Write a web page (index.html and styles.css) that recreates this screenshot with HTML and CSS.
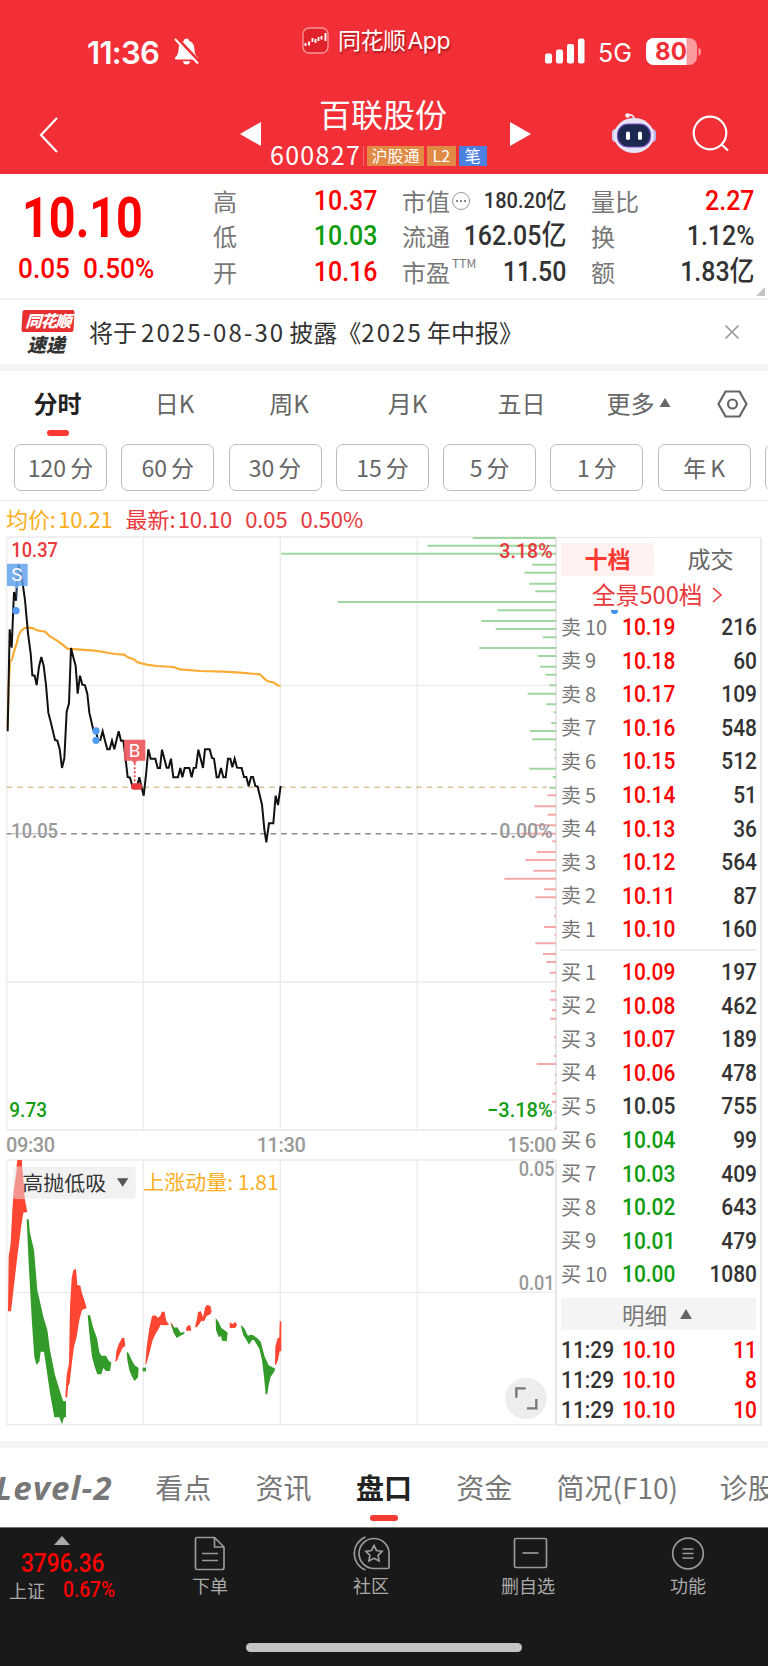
FILE: index.html
```
<!DOCTYPE html>
<html lang="zh-CN">

<head>
    <meta charset="UTF-8">
    <title>百联股份 600827</title>
    <link rel="stylesheet" href="styles.css">
</head>

<body>
    <!-- 顶部 -->
    <header class="header">
        <div class="status">
            <div class="clock">
                <span>11:36</span>
                <svg width="27" height="29" viewBox="0 0 27 29">
                    <path d="M13.5 1.5c1.6 0 2.6 1 2.7 2.4 3.7 1.2 5 4.200 5.200 8.100.2 4.500 1.300 6.500 3.300 8.300.8.8.5 2.200-.8 2.200H3.100c-1.300 0-1.600-1.400-.8-2.200 2-1.800 3.100-3.800 3.300-8.300.2-3.900 1.500-6.900 5.200-8.100.1-1.400 1.100-2.400 2.700-2.400zM9.800 24.200h7.400c-.4 2-1.700 3.300-3.700 3.300s-3.300-1.300-3.700-3.300z" fill="#fff"/>
                    <path d="M3.500 1.500L26 25.500" stroke="#f22f37" stroke-width="4.500"/>
                    <path d="M2 2l23 24.500" stroke="#fff" stroke-width="2"/>
                </svg>
            </div>
            <div class="app">
                <svg width="27" height="27" viewBox="0 0 27 27">
                    <rect x="1" y="1" width="25" height="25" rx="6" fill="#e0232b" stroke="#f9979a" stroke-width="1.300"/>
                    <path d="M3.500 16v3M7 14.500v4M10.500 15v-4M13.500 12v4M16.500 10v4M19.500 9v3.500M23.500 6v8" stroke="#fff" stroke-width="1.900"/>
                </svg>
                <span>同花顺 App</span>
            </div>
            <div class="signal">
                <svg width="40" height="26" viewBox="0 0 40 26" fill="#fff">
                    <rect x="0" y="15.500" width="7" height="10" rx="2"/>
                    <rect x="11" y="11.500" width="7" height="14" rx="2"/>
                    <rect x="22" y="6" width="7" height="19.500" rx="2"/>
                    <rect x="33" y=".5" width="6.500" height="25" rx="2"/>
                </svg>
                <span>5G</span>
                <svg width="56" height="28" viewBox="0 0 56 28">
                    <rect x="0" y="0" width="51" height="27" rx="8" fill="#f99a9e"/>
                    <path d="M8 0h32.500v27H8a8 8 0 0 1-8-8V8a8 8 0 0 1 8-8z" fill="#fff"/>
                    <path d="M52.500 9.500c3.500 1.200 3.500 7.300 0 8.500z" fill="#f99a9e"/>
                    <text x="25" y="22" class="bat">80</text>
                </svg>
            </div>
        </div>
        <div class="titlebar">
            <svg class="back" width="22" height="38" viewBox="0 0 22 38"><path d="M19 2L3 19l16 17" fill="none" stroke="#fff" stroke-width="2.200"/></svg>
            <svg class="prev" width="21" height="24" viewBox="0 0 21 24"><path d="M21 0v24L0 12z" fill="#fff"/></svg>
            <div class="stock">
                <h1>百联股份</h1>
                <div class="code">
                    <span class="code-num">600827</span><i></i>
                    <b class="w3">沪股通</b><b>L2</b><b class="blue">笔</b>
                </div>
            </div>
            <svg class="next" width="21" height="24" viewBox="0 0 21 24"><path d="M0 0v24l21-12z" fill="#fff"/></svg>
            <svg class="robot" width="44" height="42" viewBox="0 0 44 42">
                <path d="M15 3.500c5-1.500 7 0 7 4" fill="none" stroke="#e8e6fb" stroke-width="1.800"/>
                <circle cx="15.500" cy="3.500" r="2.300" fill="#f4f2ff"/>
                <rect x="0" y="17" width="8" height="13" rx="4" fill="#cfd0f5"/>
                <rect x="36" y="17" width="8" height="13" rx="4" fill="#b9b2ee"/>
                <ellipse cx="22" cy="23.500" rx="20" ry="17.500" fill="#e6e5f8"/>
                <rect x="5.500" y="12" width="33" height="23" rx="10.500" fill="#1d2850" stroke="#7a4ec4" stroke-width="1.200"/>
                <rect x="14" y="19.500" width="4" height="8.500" rx="1.800" fill="#fff"/>
                <rect x="26" y="19.500" width="4" height="8.500" rx="1.800" fill="#fff"/>
            </svg>
            <svg class="search" width="38" height="38" viewBox="0 0 38 38"><g fill="none" stroke="#fff" stroke-width="2.200"><circle cx="18" cy="18" r="16.300"/><path d="M29 29l7 6.500"/></g></svg>
        </div>
    </header>

    <!-- 行情数据 -->
    <section class="quote">
        <div class="last red">
            <div class="price"><span>10.10</span></div>
            <div class="change"><span class="n">0.05</span><span class="n">0.50%</span></div>
        </div>
        <div class="stats s1">
            <label>高</label><span class="n red">10.37</span>
            <label>低</label><span class="n green">10.03</span>
            <label>开</label><span class="n red">10.16</span>
        </div>
        <div class="stats s2">
            <label>市值<svg width="20" height="20" viewBox="0 0 20 20"><circle cx="10" cy="10" r="8.500" fill="none" stroke="#999"/><path d="M5 10h2M9 10h2M13 10h2" stroke="#888" stroke-width="1.800"/></svg></label><span class="n small">180.20亿</span>
            <label>流通</label><span class="n">162.05亿</span>
            <label>市盈<sup>TTM</sup></label><span class="n">11.50</span>
        </div>
        <div class="stats s3">
            <label>量比</label><span class="n red">2.27</span>
            <label>换</label><span class="n">1.12%</span>
            <label>额</label><span class="n">1.83亿</span>
        </div>
        <svg class="corner" width="9" height="9"><path d="M9 0v9H0z" fill="#c4c4c4"/></svg>
    </section>

    <!-- 速递 -->
    <section class="news">
        <div class="news-logo"><em>同花顺</em><strong>速递</strong></div>
        <p>将于<s></s><span>2025-08-30</span><s></s>披露《<span>2025</span><s></s>年中报》</p>
        <svg width="16" height="16" viewBox="0 0 16 16"><path d="M1.500 1.500l13 13M14.500 1.500l-13 13" stroke="#999" stroke-width="1.700"/></svg>
    </section>

    <!-- 周期 -->
    <nav class="periods">
        <span class="on">分时</span><span>日K</span><span>周K</span><span>月K</span><span>五日</span>
        <span>更多<svg width="12" height="10"><path d="M6 0l5.500 9H.5z" fill="#666"/></svg></span>
        <span><svg width="31" height="28" viewBox="0 0 31 28"><g fill="none" stroke="#666" stroke-width="2.200"><path d="M8.500 1.500h14l7 12.500-7 12.500h-14L1.500 14z"/><circle cx="15.500" cy="14" r="4.500"/></g></svg></span>
    </nav>
    <div class="minutes">
        <span>120<s></s>分</span><span>60<s></s>分</span><span>30<s></s>分</span><span>15<s></s>分</span><span>5<s></s>分</span><span>1<s></s>分</span><span>年<s></s>K</span><span></span>
    </div>
    <div class="legend">
        <span class="orange">均价: 10.21</span><span>最新: 10.10</span><span>0.05</span><span>0.50%</span>
    </div>

    <main class="trade">
        <div class="charts">
            <!-- 分时图 -->
            <svg class="chart" width="557" height="602" viewBox="0 0 1671 1806">
                <path d="M20 21H1668M20 466H1668M20 1356H1668M20 1800H1668M20 21V1800M430 21V1800M841 21V1800M1252 21V1800" class="grid"/>
                <path d="M1668 21V1800" class="edge"/>
                <path class="vol-g" d="M1418 24H1668M1282 47H1668M844 71H1668M1596 104H1668M1574 128H1668M1588 161H1668M1606 184H1668M1013 216H1668M1492 241H1668M1444 273H1668M1487 297H1668M1628 322H1668M1438 354H1668M1614 378H1668M1620 410H1668M1636 434H1668M1648 466H1668M1583 491H1668M1639 523H1668M1661 547H1668M1654 579H1668M1590 603H1668M1596 628H1668M1662 659H1668M1664 684H1668M1588 716H1668M1658 741H1668M1648 773H1668"/>
                <path class="vol-r" d="M1642 796H1668M1603 829H1668M1643 854H1668M1602 886H1668M1562 911H1668M1657 934H1668M1610 966H1668M1576 990H1668M1600 1022H1668M1513 1046H1668M1632 1078H1668M1606 1102H1668M1664 1135H1668M1662 1159H1668M1632 1191H1668M1664 1215H1668M1606 1240H1668M1629 1272H1668M1639 1296H1668M1649 1328H1668M1653 1384H1668M1651 1409H1668M1656 1441H1668M1651 1466H1668M1666 1498H1668M1662 1522H1668M1665 1546H1668M1662 1578H1668M1610 1602H1668M1665 1635H1668M1664 1659H1668M1657 1691H1668M1656 1715H1668M1662 1747H1668M1664 1795H1668"/>
                <path d="M20 772H1640" stroke="#dcc29a" class="dash"/>
                <path d="M20 911H34M182 911H1498" stroke="#8c8c8c" class="dash"/>
                <path d="M34 911H174M1500 911H1560" stroke="#b4b4b4" stroke-width="3"/>
                <path class="avg" d="M23 590L26 470 30 395 36 388 44 358 50 340 56 316 64 302 74 294 90 293 100 295 110 301 136 305 148 318 170 331 184 341 202 356 230 358 285 362 310 366 345 372 372 374 384 382 402 388 412 397 440 404 470 408 520 411 540 418 600 423 670 425 720 428 780 433 790 443 802 453 822 458 832 466 842 468"/>
                <path class="line" d="M23 604L29 298 35 353 42 186 48 212 54 104 62 130 68 160 75 210 84 310 92 370 97 436 104 437 110 465 117 410 124 381 131 407 138 465 145 548 152 575 165 630 172 632 179 657 186 714 193 685 200 545 207 520 213 354 220 382 227 408 233 491 240 437 247 464 255 466 262 492 268 548 280 600 288 605 294 630 301 630 308 604 315 632 322 658 329 658 336 632 343 658 349 632 356 604 363 632 370 632 376 680 383 741 390 743 397 768 411 770 418 742 424 768 431 797 438 735 445 658 452 686 466 686 473 714 480 714 486 659 493 686 500 713 506 713 513 686 520 742 534 742 541 714 547 742 554 714 568 714 575 742 581 714 588 713 595 659 602 686 609 714 615 658 629 658 636 684 642 686 650 742 656 742 663 714 670 742 677 742 684 686 691 686 697 712 704 686 711 713 725 714 732 741 739 741 746 769 753 741 759 741 766 768 773 770 786 824 793 898 799 937 807 880 820 880 827 797 834 825 842 768"/>
                <path d="M21 101H83V168H58L50 176 42 168H21z" fill="#6eaaf2" fill-opacity=".92"/>
                <path d="M56 104L62 130 68 160V166M50 176V205" stroke="#36659f" stroke-width="4" fill="none" opacity=".6"/>
                <text x="50" y="154" class="mark">S</text>
                <g fill="#539bf3"><circle cx="48" cy="242" r="11"/><circle cx="288" cy="603" r="11"/><circle cx="288" cy="631" r="11"/></g>
                <path d="M372 629H436V692H412L404 702 396 692H372z" fill="#ee585b" fill-opacity=".93"/>
                <text x="404" y="681" class="mark">B</text>
                <path d="M404 700V760" stroke="#e8393c" stroke-width="5" stroke-dasharray="6 6"/>
                <rect x="393" y="760" width="33" height="19" rx="8" fill="#e8393c"/>
                <g class="lab">
                    <text x="34" y="82" fill="#e8393c" textLength="140" lengthAdjust="spacingAndGlyphs">10.37</text>
                    <text x="34" y="923" class="dim" textLength="140" lengthAdjust="spacingAndGlyphs">10.05</text>
                    <text x="28" y="1762" fill="#139c13" textLength="113" lengthAdjust="spacingAndGlyphs">9.73</text>
                    <text x="1498" y="83" fill="#e8393c" textLength="160" lengthAdjust="spacingAndGlyphs">3.18%</text>
                    <text x="1498" y="923" class="dim" textLength="160" lengthAdjust="spacingAndGlyphs">0.00%</text>
                    <text x="1461" y="1762" fill="#139c13" textLength="197" lengthAdjust="spacingAndGlyphs">−3.18%</text>
                </g>
            </svg>
            <div class="axis"><span>09:30</span><span>11:30</span><span>15:00</span></div>
            <!-- 副图指标 -->
            <svg class="chart" width="557" height="268" viewBox="0 204 1671 804">
                <path d="M20 210H1668M20 607H1668M20 1004H1668M20 210V1004M430 210V1004M841 210V1004M1252 210V1004" class="grid"/>
                <path d="M1668 210V1004" class="edge"/>
                <g fill="#fe4632">
                    <path d="M24 664L26 500 32 460 37 360 42 290 52 210H66V240L74 325 82 366 70 368 62 420 52 500 45 560 33 664z"/>
                    <path d="M196 922L200 855 207 820 210 650 215 565 220 541 228 536 232 585 241 587 246 610 253 630 260 654 246 660 238 690 230 740 222 770 216 815 209 880 204 890 202 922z"/>
                    <path d="M346 815L349 785 356 763 366 744 373 744 376 768 368 773 360 790 351 812z"/>
                    <path d="M436 824L440 770 448 715 456 678 466 676 474 684 482 676 485 665 494 665 498 690 507 705 492 706 482 704 476 716 468 730 458 750 448 790 439 822z"/>
                    <path d="M511 696L518 704 524 716 516 714zM558 722L559 712 566 706 571 706 574 722zM585 712L592 680 594 666 603 664 609 682 615 654 620 645 631 647 635 664 632 672 620 678 612 694 604 692 598 702 590 712zM689 697L698 702 706 696 711 704 706 714H689z"/>
                    <path d="M825 824L826 770 832 746 838 742 839 694H844V784H839L834 810 828 824z"/>
                </g>
                <g fill="#339b29">
                    <path d="M80 388H86L90 430 102 480 112 600 130 680 142 720 150 780 165 855 185 920 190 934H198V982H192L186 1003 178 982H163L150 910 140 840 132 785H122L118 815 109 824 103 800 96 700 86 520z"/>
                    <path d="M263 676H270L280 715 291 745 298 786 304 797 318 797 326 812 334 818 330 843H318L310 834 304 853H292L284 830 276 800 268 730z"/>
                    <path d="M380 785L386 790 396 812 404 826 416 834 414 862 404 873 396 860 388 840 382 810z"/>
                    <rect x="428" y="833" width="10" height="11"/>
                    <path d="M513 702L524 713 532 712 542 728 553 726V731L540 738 530 744 520 727zM647 684L656 696 664 714 676 722 683 728 680 754 666 752 663 738 656 742 648 720zM722 705L732 713 744 738 750 734 760 736 772 745 782 755 794 800 806 826 826 836 822 846 812 860 806 885 802 913H797L792 860 786 810 778 776 762 750 756 750 747 764 738 748 730 736z"/>
                </g>
                <rect x="40" y="230" width="367" height="96" rx="8" fill="#eee" fill-opacity=".85"/>
                <path d="M52 230H67L74 326H40L43 290z" fill="#f3938e"/>
                <path d="M351 265h34l-17 25z" fill="#555"/>
                <text x="67" y="303" class="ind" textLength="252" lengthAdjust="spacingAndGlyphs" fill="#333">高抛低吸</text>
                <text x="430" y="300" class="ind" textLength="406" lengthAdjust="spacingAndGlyphs" fill="#fcae1e">上涨动量: 1.81</text>
                <g class="lab dim">
                    <text x="1556" y="259" textLength="108" lengthAdjust="spacingAndGlyphs">0.05</text>
                    <text x="1556" y="601" textLength="108" lengthAdjust="spacingAndGlyphs">0.01</text>
                </g>
                <circle cx="1578" cy="925" r="62" fill="#ededed"/>
                <path d="M1549 923V895H1577M1609 927V955H1581" fill="none" stroke="#777" stroke-width="7"/>
            </svg>
        </div>

        <!-- 十档盘口 -->
        <aside class="book">
            <div class="book-tabs"><span class="on">十档</span><span>成交</span></div>
            <div class="full">全景500档<svg width="12" height="18" viewBox="0 0 12 18"><path d="M2 2l8 7-8 7" fill="none" stroke="#e8393c" stroke-width="1.600"/></svg></div>
            <div class="rows sell">
                <div><label>卖<s></s>10</label><b class="red">10.19</b><b>216</b></div>
                <div><label>卖<s></s>9</label><b class="red">10.18</b><b>60</b></div>
                <div><label>卖<s></s>8</label><b class="red">10.17</b><b>109</b></div>
                <div><label>卖<s></s>7</label><b class="red">10.16</b><b>548</b></div>
                <div><label>卖<s></s>6</label><b class="red">10.15</b><b>512</b></div>
                <div><label>卖<s></s>5</label><b class="red">10.14</b><b>51</b></div>
                <div><label>卖<s></s>4</label><b class="red">10.13</b><b>36</b></div>
                <div><label>卖<s></s>3</label><b class="red">10.12</b><b>564</b></div>
                <div><label>卖<s></s>2</label><b class="red">10.11</b><b>87</b></div>
                <div><label>卖<s></s>1</label><b class="red">10.10</b><b>160</b></div>
            </div>
            <div class="rows buy">
                <div><label>买<s></s>1</label><b class="red">10.09</b><b>197</b></div>
                <div><label>买<s></s>2</label><b class="red">10.08</b><b>462</b></div>
                <div><label>买<s></s>3</label><b class="red">10.07</b><b>189</b></div>
                <div><label>买<s></s>4</label><b class="red">10.06</b><b>478</b></div>
                <div><label>买<s></s>5</label><b>10.05</b><b>755</b></div>
                <div><label>买<s></s>6</label><b class="green">10.04</b><b>99</b></div>
                <div><label>买<s></s>7</label><b class="green">10.03</b><b>409</b></div>
                <div><label>买<s></s>8</label><b class="green">10.02</b><b>643</b></div>
                <div><label>买<s></s>9</label><b class="green">10.01</b><b>479</b></div>
                <div><label>买<s></s>10</label><b class="green">10.00</b><b>1080</b></div>
            </div>
            <div class="detail">明细<svg width="12" height="10"><path d="M6 0l6 10H0z" fill="#666"/></svg></div>
            <div class="rows ticks">
                <div><b>11:29</b><b class="red">10.10</b><b class="red">11</b></div>
                <div><b>11:29</b><b class="red">10.10</b><b class="red">8</b></div>
                <div><b>11:29</b><b class="red">10.10</b><b class="red">10</b></div>
            </div>
        </aside>
    </main>

    <!-- 底部标签 -->
    <nav class="sections">
        <span class="level">Level-2</span><span>看点</span><span>资讯</span><span class="on">盘口</span><span>资金</span><span class="f10">简况(F10)</span><span>诊股</span>
    </nav>

    <footer class="bottom">
        <div class="index">
            <svg width="16" height="9"><path d="M8 0l8 9H0z" fill="#aaa"/></svg>
            <span class="idx red">3796.36</span>
            <div><span>上证</span><span class="pct red">0.67%</span></div>
        </div>
        <div class="item doc">
            <svg width="32" height="35" viewBox="0 0 32 35"><path d="M3 1.500h17.500L30 11v20.500a2 2 0 0 1-2 2H3a1.500 1.500 0 0 1-1.500-1.500V3A1.500 1.500 0 0 1 3 1.500zM20.500 1.500V11H30M8 17.500h16M8 24.500h16"/></svg>
            <span>下单</span>
        </div>
        <div class="item">
            <svg width="37" height="35" viewBox="0 0 37 35"><path d="M12.500 1C-2.500 7-2.500 28 12.500 34M36 17.500V31a1.500 1.500 0 0 1-1.500 1.500H21a15 15 0 1 1 15-15zM21 9.500l2.500 5 5.600.8-4 4 1 5.600-5.100-2.700-5.100 2.700 1-5.600-4-4 5.600-.8z"/></svg>
            <span>社区</span>
        </div>
        <div class="item del">
            <svg width="35" height="35" viewBox="0 0 35 35"><rect x="1.500" y="2.500" width="32" height="29" rx="1.500"/><path d="M9.500 17h16"/></svg>
            <span>删自选</span>
        </div>
        <div class="item">
            <svg width="34" height="35" viewBox="0 0 34 35"><circle cx="17" cy="17.500" r="15.300"/><path d="M11.500 13h11M11.500 17.500h11M11.500 22h11"/></svg>
            <span>功能</span>
        </div>
        <div class="home"></div>
    </footer>
</body>

</html>
```
FILE: styles.css
```
* {
    box-sizing: border-box;
}

body {
    margin: 0;
    width: 768px;
    height: 1666px;
    overflow: hidden;
    background: #fff;
    color: #333;
    font-family: "Noto Sans CJK SC", sans-serif;
    font-size: 24px;
    line-height: 1;
}

svg {
    display: block;
    flex: none;
}

/* narrow gap between latin and chinese */
s {
    display: inline-block;
    width: 4px;
}

.red { color: #fe0000; }
.green { color: #0f9b0f; }
.orange { color: #fcae1e; }

/* header */
.header {
    height: 174px;
    background: #f22f37;
    color: #fff;
}

.status {
    display: flex;
    height: 100px;
    font-family: Inter, "Noto Sans CJK SC", sans-serif;
}

.clock {
    display: flex;
    width: 302px;
    padding: 37px 0 0 87px;
    gap: 0;
    font-size: 31px;
    font-weight: 600;
    letter-spacing: -0.7px;
}

.clock span { width: 86px; }

.app {
    display: flex;
    width: 243px;
    padding-top: 27px;
    gap: 9px;
    font-size: 23px;
    line-height: 28px;
    letter-spacing: -0.5px;
    word-spacing: -4px;
    text-shadow: 1px 2px 2px rgba(90, 0, 0, .5);
}

.signal {
    display: flex;
    padding-top: 38px;
    font-size: 25px;
    line-height: 31px;
}

.signal span {
    width: 61px;
    padding-left: 13px;
}

.bat {
    font: 700 24px Inter, sans-serif;
    fill: #f22f37;
    text-anchor: middle;
}

.titlebar {
    display: flex;
    height: 74px;
}

.back { margin: 16px 0 0 38px; }
.prev { margin: 22px 0 0 180px; }
.next { margin: 22px 0 0 20px; }
.robot { margin: 12px 0 0 81px; }
.search { margin: 15px 0 0 36px; }

.stock {
    width: 229px;
    padding-left: 9px;
}

h1 {
    margin: -2px 0 0 49px;
    font-size: 32px;
    font-weight: 400;
    line-height: 31px;
}

.code {
    display: flex;
    align-items: center;
    height: 20px;
    margin-top: 17px;
}

.code-num {
    width: 92px;
    margin-top: -3px;
    font-size: 25px;
    letter-spacing: 1.3px;
}

.code i {
    width: 1px;
    height: 20px;
    margin: 0 3px 0 2px;
    background: #f5696a;
}

.code b {
    width: 29px;
    height: 20px;
    margin-right: 3px;
    background: #e08a46;
    font-size: 16px;
    font-weight: 400;
    line-height: 18px;
    text-align: center;
}

.code .w3 { width: 58px; }
.code .blue { background: #4c80df; }

/* quote */
.quote {
    position: relative;
    display: flex;
    height: 126px;
    border-bottom: 2px solid #f1f1f1;
}

.last {
    width: 213px;
    font-family: Roboto, sans-serif;
    font-weight: 500;
}

.price {
    height: 82px;
    padding: 17px 0 0 22px;
    font-size: 55px;
    font-weight: 700;
}

.price span {
    display: inline-block;
    transform: scaleX(.85);
    transform-origin: left;
}

.change {
    display: flex;
    padding-left: 18px;
}

.change .n {
    width: 65px;
    font-size: 27px;
    transform: scaleX(.97);
    transform-origin: left;
}

.n {
    font-family: Roboto, "Noto Sans CJK SC", sans-serif;
    font-size: 28px;
    font-weight: 500;
    transform: scaleX(.89);
    transform-origin: right;
    white-space: nowrap;
}

.stats {
    display: grid;
    grid-template-columns: auto auto;
    grid-template-rows: 35px 36px 35px;
    justify-content: space-between;
    align-items: center;
    padding-top: 9px;
    height: 116px;
}

.stats .n {
    text-align: right;
}

.stats .small {
    font-size: 22.5px;
}

.stats label {
    display: flex;
    align-items: center;
    color: #777;
    font-size: 24px;
}

.stats sup {
    margin: -18px 0 0 2px;
    font-size: 12px;
}

.stats label svg { margin-left: 1px; }

.s1 { width: 164px; }
.s2 { width: 164px; margin-left: 25px; }
.s3 { width: 164px; margin-left: 25px; }

.s2 .n { margin-left: -30px; }

.corner {
    position: absolute;
    right: 3px;
    bottom: 2px;
}

/* news */
.news {
    display: flex;
    align-items: center;
    height: 71px;
    padding: 0 28px 0 22px;
    border-bottom: 7px solid #f4f4f4;
}

.news-logo {
    width: 52px;
    height: 44px;
}

.news-logo em,
.news-logo strong {
    display: block;
    font-size: 16px;
    font-weight: 900;
    text-align: center;
    font-style: italic;
}

.news-logo em {
    height: 22px;
    border-radius: 2px;
    background: #e83033;
    color: #fff;
    line-height: 20px;
    letter-spacing: -1px;
    transform: skewX(-3deg);
}

.news-logo strong {
    width: 48px;
    margin-top: 2px;
    font-size: 19px;
}

.news p {
    flex: 1;
    margin: -1px 0 0 15px;
    font-size: 24px;
    white-space: nowrap;
}

.news p span { letter-spacing: 2.1px; }

/* period tabs */
.periods {
    display: grid;
    grid-template-columns: 115px 119px 110px 127px 101px 133px 55px;
    height: 73px;
    color: #666;
}

.periods span {
    display: flex;
    align-items: center;
    justify-content: center;
    height: 64px;
}

.periods span svg { margin: 0 0 0 4px; }
.periods span:last-child svg { margin: 2px 0 0; }

.periods .on {
    justify-content: flex-start;
    flex-direction: column;
    padding-top: 20px;
    color: #222;
    font-weight: 700;
}

.periods .on::after {
    content: "";
    flex: none;
    width: 22px;
    height: 6px;
    margin-top: 15px;
    border-radius: 3px;
    background: #fc3a33;
}

.minutes {
    display: flex;
    gap: 14.3px;
    height: 57px;
    padding-left: 14px;
    border-bottom: 1px solid #e6e6e6;
    overflow: hidden;
}

.minutes span {
    flex: none;
    width: 93px;
    height: 47px;
    border: 1.5px solid #bdbdbd;
    border-radius: 7px;
    color: #666;
    font-size: 23px;
    line-height: 44px;
    text-align: center;
}

.legend {
    display: flex;
    gap: 13px;
    height: 29px;
    padding-left: 6px;
    color: #e8393c;
    font-size: 22px;
    line-height: 34px;
    letter-spacing: -0.1px;
    word-spacing: -2.5px;
}

/* charts */
.trade {
    display: flex;
    height: 918px;
    border-bottom: 7px solid #f4f4f4;
}

.charts { width: 557px; }

.grid { fill: none; stroke: #ebebeb; stroke-width: 4; }
.edge { stroke: #e6e6e6; stroke-width: 6; }
.vol-g { stroke: #a0d7a0; stroke-width: 6; }
.vol-r { stroke: #f5a9ab; stroke-width: 6; }
.dash { stroke-width: 4.500; stroke-dasharray: 17 14.500; }
.avg { fill: none; stroke: #fbaa33; stroke-width: 6.500; }
.line { fill: none; stroke: #111; stroke-width: 6; }

.lab { font: 500 61px Roboto, sans-serif; }
.dim { fill: #999; }
.mark { font: 56px Roboto, sans-serif; fill: #fff; text-anchor: middle; }
.ind { font: 60px "Noto Sans CJK SC", sans-serif; }

.axis {
    display: flex;
    justify-content: space-between;
    height: 26px;
    padding: 3px 1px 0 6px;
    color: #999;
    font: 500 20px/20px Roboto, sans-serif;
    letter-spacing: -0.4px;
}

/* order book */
.book {
    width: 205px;
    height: 889px;
    margin-top: 7px;
    padding: 5px 3px 0 4px;
    border: solid #e9e9e9;
    border-width: 1px 2px 2px 0;
}

.book-tabs {
    display: flex;
    line-height: 31px;
    text-align: center;
    font-size: 23px;
    color: #666;
}

.book-tabs span {
    width: 93px;
    height: 33px;
}

.book-tabs span + span { margin-left: 10px; }

.book-tabs .on {
    border-radius: 3px;
    background: #fff1f0;
    color: #fc3a33;
    font-weight: 700;
}

.full {
    display: flex;
    align-items: center;
    gap: 8px;
    height: 34px;
    padding: 4px 0 0 31px;
    color: #e8393c;
    font-size: 23.7px;
}

.sell {
    position: relative;
    height: 341px;
    padding-top: 1px;
    border-bottom: 2px solid #eee;
}

.sell::before {
    content: "";
    position: absolute;
    left: 50px;
    top: 0;
    width: 7px;
    height: 4px;
    border-radius: 0 0 4px 4px;
    background: #3f8ff0;
}

.buy {
    height: 347px;
    padding-top: 5px;
}

.rows div {
    display: grid;
    grid-template-columns: 61px 61px 1fr;
    align-items: center;
    height: 33.56px;
}

.rows b {
    font-family: Roboto, sans-serif;
    font-size: 23px;
    font-weight: 500;
    transform: scaleX(.91);
    transform-origin: left;
}

.rows b:last-child {
    text-align: right;
    transform-origin: right;
}

.rows label {
    margin-top: -2px;
    color: #777;
    font-size: 20px;
}

.detail {
    display: flex;
    align-items: center;
    gap: 13px;
    height: 32px;
    margin-right: 1px;
    padding-left: 61px;
    background: #f4f4f4;
    color: #777;
    font-size: 22.5px;
}

.ticks { padding-top: 5px; }
.ticks div { height: 30.4px; }

/* section tabs */
.sections {
    display: flex;
    gap: 44.3px;
    height: 79px;
    padding-top: 25px;
    color: #777;
    font-size: 28px;
    white-space: nowrap;
    overflow: hidden;
}

.sections span { flex: none; }

.sections .level {
    width: 116px;
    margin-left: -5px;
    font-family: "Open Sans", sans-serif;
    font-size: 33px;
    line-height: 30px;
    font-weight: 700;
    font-style: italic;
    letter-spacing: 1.2px;
}

.sections .f10 { width: 119px; }

.sections .on {
    display: flex;
    flex-direction: column;
    align-items: center;
    color: #222;
    font-weight: 700;
}

.sections .on::after {
    content: "";
    flex: none;
    width: 28px;
    height: 6px;
    margin-top: 14px;
    border-radius: 3px;
    background: #fc3a33;
}

/* bottom bar */
.bottom {
    display: grid;
    grid-template-columns: 129px 162px 160px 154px 166px;
    grid-template-rows: 115px 24px;
    background: #191919;
    border-top: 1px solid #777;
    color: #aaa;
    font-size: 18px;
}

.index {
    padding-top: 8px;
}

.index svg { margin: 0 0 6px 54px; }

.index div {
    display: flex;
    padding: 6px 0 0 9px;
}

.idx,
.pct {
    display: block;
    margin-left: 21px;
    font: 500 26px/24px Roboto, sans-serif;
    transform: scaleX(.87);
    transform-origin: left;
}

.pct { font-size: 22px; line-height: 18px; margin-left: 18px; }

.item {
    display: flex;
    flex-direction: column;
    align-items: center;
    gap: 5px;
    padding-top: 8px;
}

.item svg {
    fill: none;
    stroke: #999;
    stroke-width: 1.700;
}

.del svg { margin-left: 5px; }

.home {
    grid-column: 1 / -1;
    width: 276px;
    height: 9px;
    margin-left: 246px;
    border-radius: 5px;
    background: #c4c4c4;
}
```
